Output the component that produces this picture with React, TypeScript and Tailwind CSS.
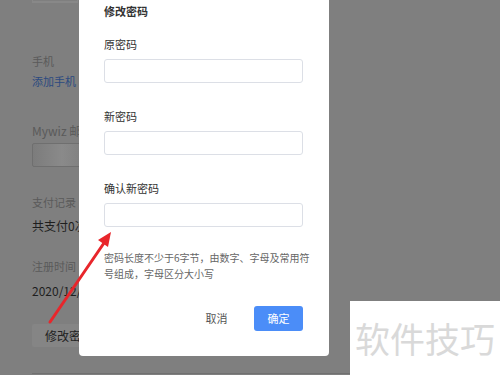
import React from "react";

const font = { fontFamily: '"Noto Sans CJK SC", "Noto Sans", sans-serif' };

export default function App() {
  return (
    <div className="relative w-[500px] h-[375px] overflow-hidden bg-[#7f7f7f]" style={font}>
      {/* page behind overlay */}
      <div className="flex flex-col pl-[32px] w-[400px]">
        <div className="w-[46px] h-[3px] border-b-2 border-x border-[#888888]" />
        <div className="mt-[50px] h-[16px] leading-[16px] text-[11px] text-[#5a5a5a]">手机</div>
        <div className="mt-[4px] h-[16px] leading-[16px] text-[11px] text-[#2c4a80]">添加手机</div>
        <div className="mt-[33px] h-[18px] leading-[18px] text-[12px] text-[#5a5a5a]">Mywiz 邮箱</div>
        <div className="mt-[3px] w-[60px] h-[24px] rounded-[2px] border border-[#6f6f6f] bg-gradient-to-r from-[#7c7c7c] via-[#8a8a8a] to-[#7c7c7c]" />
        <div className="mt-[27px] h-[16px] leading-[16px] text-[11px] text-[#5a5a5a]">支付记录</div>
        <div className="mt-[7px] h-[18px] leading-[18px] text-[12px] text-[#1e1e1e]">共支付0次</div>
        <div className="mt-[23px] h-[16px] leading-[16px] text-[11px] text-[#5a5a5a]">注册时间</div>
        <div className="mt-[8px] h-[18px] leading-[18px] text-[12px] text-[#1e1e1e]">2020/12/01</div>
        <div className="mt-[24px] w-[80px] h-[23px] rounded-[2px] bg-[#858585] pl-[13px] leading-[23px] text-[12px] text-[#222222]">修改密码</div>
        <div className="mt-[26px] w-[468px] border-t border-[#707070]" />
      </div>

      {/* modal */}
      <div className="absolute left-[79px] top-0 w-[250px] h-[356px] bg-white rounded-b-[4px] pl-[25px] flex flex-col">
        <div className="w-[199px] flex flex-col">
          <div className="mt-[3px] h-[16px] leading-[16px] text-[11px] font-semibold text-[#333333]">修改密码</div>
          <div className="mt-[17px] h-[17px] leading-[17px] text-[11px] text-[#333333]">原密码</div>
          <div className="mt-[6px] h-[24px] rounded-[3px] border border-[#dcdfe6]" />
          <div className="mt-[25px] h-[17px] leading-[17px] text-[11px] text-[#333333]">新密码</div>
          <div className="mt-[6px] h-[24px] rounded-[3px] border border-[#dcdfe6]" />
          <div className="mt-[25px] h-[17px] leading-[17px] text-[11px] text-[#333333]">确认新密码</div>
          <div className="mt-[6px] h-[24px] rounded-[3px] border border-[#dcdfe6]" />
          <div className="mt-[23px] leading-[16px] text-[10px] text-[#666666] whitespace-nowrap">
            密码长度不少于6字节，由数字、字母及常用符
            <br />
            号组成，字母区分大小写
          </div>
          <div className="mt-[24px] flex justify-end gap-[13px]">
            <div className="w-[49px] h-[25px] leading-[25px] text-center text-[11px] text-[#555555]">取消</div>
            <div className="w-[49px] h-[25px] leading-[25px] text-center text-[11px] text-white bg-[#4b8df8] rounded-[3px]">确定</div>
          </div>
        </div>
      </div>

      {/* red arrow */}
      <svg className="absolute left-0 top-0" width="500" height="375">
        <line x1="50" y1="322" x2="104" y2="243" stroke="#e8262b" strokeWidth="3" strokeLinecap="round" />
        <polygon points="111,232 108,247 98,240" fill="#e8262b" />
      </svg>

      {/* watermark */}
      <div className="absolute left-[350px] top-[301px] w-[150px] h-[74px] bg-white pl-[5px] pt-[14px] text-[35px] leading-[46px] text-[#d9d9d9]">
        软件技巧
      </div>
    </div>
  );
}
